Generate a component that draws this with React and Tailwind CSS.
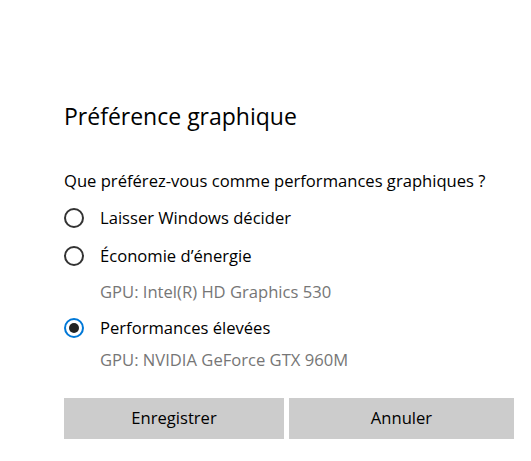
import React, { useState } from "react";

const options = [
  { id: "auto", label: "Laisser Windows décider" },
  { id: "eco", label: "Économie d’énergie", gpu: "GPU: Intel(R) HD Graphics 530" },
  { id: "perf", label: "Performances élevées", gpu: "GPU: NVIDIA GeForce GTX 960M" },
];

const Radio = ({ checked }) => (
  <span
    className={`flex items-center justify-center w-5 h-5 rounded-full border-2 shrink-0 ${
      checked ? "border-[#0078d7]" : "border-[#333333]"
    }`}
  >
    {checked && <span className="w-[10px] h-[10px] rounded-full bg-[#222222]"></span>}
  </span>
);

export default function App() {
  const [selected, setSelected] = useState("perf");

  return (
    <div
      className="w-[531px] h-[461px] bg-white text-[#000000] pl-[64px] pr-[17px] pt-[98px]"
      style={{ fontFamily: '"Open Sans", "Noto Sans", sans-serif' }}
    >
      <h1 className="text-[23px] leading-[36px] font-normal">Préférence graphique</h1>

      <p className="mt-[34px] text-[16.6px] leading-[26px]">Que préférez-vous comme performances graphiques ?</p>

      <div className="mt-[8px] flex flex-col">
        <div className="flex items-center gap-4 h-[32px]" onClick={() => setSelected("auto")}>
          <Radio checked={selected === "auto"} />
          <span className="text-[16.6px]">{options[0].label}</span>
        </div>
        <div className="mt-[6px] flex items-center gap-4 h-[32px]" onClick={() => setSelected("eco")}>
          <Radio checked={selected === "eco"} />
          <span className="text-[16.6px]">{options[1].label}</span>
        </div>
        <div className="mt-[7px] pl-[36px] h-[26px] leading-[26px] text-[16.6px] text-[#767676]">{options[1].gpu}</div>
        <div className="mt-[7px] flex items-center gap-4 h-[32px]" onClick={() => setSelected("perf")}>
          <Radio checked={selected === "perf"} />
          <span className="text-[16.6px]">{options[2].label}</span>
        </div>
        <div className="mt-[3px] pl-[36px] h-[26px] leading-[26px] text-[16.6px] text-[#767676]">{options[2].gpu}</div>
      </div>

      <div className="mt-[25px] flex gap-[5px]">
        <button className="w-[220px] h-[41px] bg-[#cccccc] text-[16.6px]">Enregistrer</button>
        <button className="w-[225px] h-[41px] bg-[#cccccc] text-[16.6px]">Annuler</button>
      </div>
    </div>
  );
}
